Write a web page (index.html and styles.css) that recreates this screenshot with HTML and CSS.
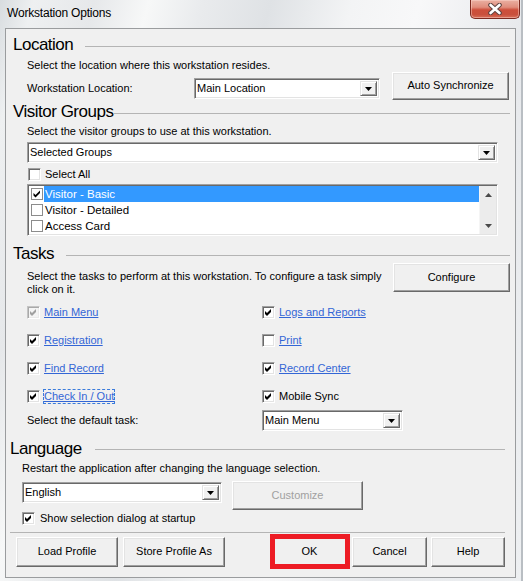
FILE: index.html
```html
<!DOCTYPE html>
<html>
<head>
<meta charset="utf-8">
<title>Workstation Options</title>
<link rel="stylesheet" href="styles.css">
</head>
<body>
<div class="window">
  <div class="titlebar">
    <div class="title">Workstation Options</div>
    <div class="close">
      <svg width="14" height="12" viewBox="0 0 14 12"><path d="M2.5 2 L11.5 10 M11.5 2 L2.5 10" stroke="#5e4340" stroke-width="4.6" stroke-linecap="round" fill="none"/><path d="M2.5 2 L11.5 10 M11.5 2 L2.5 10" stroke="#ffffff" stroke-width="2.6" stroke-linecap="round" fill="none"/></svg>
    </div>
  </div>
  <div class="client">
    <div class="heading h-loc">Location</div>
    <div class="desc">Select the location where this workstation resides.</div>
    <div class="loc-row">
      <div class="loc-label">Workstation Location:</div>
      <div class="combo loc-combo"><span class="val">Main Location</span><span class="drop"><svg width="7" height="4" viewBox="0 0 7 4"><polygon points="0,0 7,0 3.5,4" fill="#000"/></svg></span></div>
      <div class="btn sync">Auto Synchronize</div>
    </div>

    <div class="heading h-vis">Visitor Groups</div>
    <div class="desc">Select the visitor groups to use at this workstation.</div>
    <div class="combo wide"><span class="val">Selected Groups</span><span class="drop"><svg width="7" height="4" viewBox="0 0 7 4"><polygon points="0,0 7,0 3.5,4" fill="#000"/></svg></span></div>
    <div class="check-row selall"><span class="cb"></span><span>Select All</span></div>
    <div class="listbox">
      <div class="items">
        <div class="item"><span class="lcb"><svg width="10" height="10" viewBox="0 0 10 10"><polygon points="1.5,4 3.5,6 8,1.5 8,4 3.5,8.5 1.5,6.5" fill="#000"/></svg></span><span class="itext sel">Visitor - Basic</span></div>
        <div class="item"><span class="lcb"></span><span class="itext">Visitor - Detailed</span></div>
        <div class="item"><span class="lcb"></span><span class="itext">Access Card</span></div>
      </div>
      <div class="sb">
        <svg width="7" height="4" viewBox="0 0 7 4"><polygon points="3.5,0 7,4 0,4" fill="#4a4a4a"/></svg>
        <svg width="7" height="4" viewBox="0 0 7 4"><polygon points="0,0 7,0 3.5,4" fill="#4a4a4a"/></svg>
      </div>
    </div>

    <div class="heading h-tasks">Tasks</div>
    <div class="tasks-row">
      <div class="tasks-desc">Select the tasks to perform at this workstation. To configure a task simply<br>click on it.</div>
      <div class="btn conf">Configure</div>
    </div>
    <div class="task-grid">
      <div class="task"><span class="cb on dis"><svg width="11" height="11" viewBox="0 0 11 11"><polygon points="2,4 4,6 8,2 8,5 4,9 2,7" fill="#a0a0a0"/></svg></span><span class="link">Main Menu</span></div>
      <div class="task"><span class="cb on"><svg width="11" height="11" viewBox="0 0 11 11"><polygon points="2,4 4,6 8,2 8,5 4,9 2,7" fill="#000"/></svg></span><span class="link">Logs and Reports</span></div>
      <div class="task"><span class="cb on"><svg width="11" height="11" viewBox="0 0 11 11"><polygon points="2,4 4,6 8,2 8,5 4,9 2,7" fill="#000"/></svg></span><span class="link">Registration</span></div>
      <div class="task"><span class="cb"></span><span class="link">Print</span></div>
      <div class="task"><span class="cb on"><svg width="11" height="11" viewBox="0 0 11 11"><polygon points="2,4 4,6 8,2 8,5 4,9 2,7" fill="#000"/></svg></span><span class="link">Find Record</span></div>
      <div class="task"><span class="cb on"><svg width="11" height="11" viewBox="0 0 11 11"><polygon points="2,4 4,6 8,2 8,5 4,9 2,7" fill="#000"/></svg></span><span class="link">Record Center</span></div>
      <div class="task"><span class="cb on"><svg width="11" height="11" viewBox="0 0 11 11"><polygon points="2,4 4,6 8,2 8,5 4,9 2,7" fill="#000"/></svg></span><span class="link focus">Check In / Out</span></div>
      <div class="task"><span class="cb on"><svg width="11" height="11" viewBox="0 0 11 11"><polygon points="2,4 4,6 8,2 8,5 4,9 2,7" fill="#000"/></svg></span><span>Mobile Sync</span></div>
    </div>
    <div class="default-row">
      <div class="default-label">Select the default task:</div>
      <div class="combo task-combo"><span class="val">Main Menu</span><span class="drop"><svg width="7" height="4" viewBox="0 0 7 4"><polygon points="0,0 7,0 3.5,4" fill="#000"/></svg></span></div>
    </div>

    <div class="heading h-lang">Language</div>
    <div class="desc lang-desc">Restart the application after changing the language selection.</div>
    <div class="lang-row">
      <div class="combo lang-combo"><span class="val">English</span><span class="drop"><svg width="7" height="4" viewBox="0 0 7 4"><polygon points="0,0 7,0 3.5,4" fill="#000"/></svg></span></div>
      <div class="btn custom disabled">Customize</div>
    </div>
    <div class="check-row showsel"><span class="cb on"><svg width="11" height="11" viewBox="0 0 11 11"><polygon points="2,4 4,6 8,2 8,5 4,9 2,7" fill="#000"/></svg></span><span>Show selection dialog at startup</span></div>

    <div class="separator"></div>
    <div class="footer">
      <div class="btn wbtn">Load Profile</div>
      <div class="btn wbtn">Store Profile As</div>
      <div class="btn nbtn ok">OK</div>
      <div class="btn nbtn cancel">Cancel</div>
      <div class="btn help">Help</div>
    </div>
  </div>
</div>
</body>
</html>
```
FILE: styles.css
```css
* { box-sizing: border-box; }
html, body { margin: 0; padding: 0; }
body {
  width: 523px;
  height: 581px;
  overflow: hidden;
  font-family: "Liberation Sans", Arial, sans-serif;
  font-size: 11px;
  color: #000;
  background: #e6e9ec;
}
.window {
  width: 523px;
  height: 581px;
  display: flex;
  flex-direction: column;
  background: linear-gradient(105deg, #d8dcdf 0%, #eef0f1 5%, #e6e8ea 14%, #f7f8f8 22%, #e9ebed 30%, #dfe2e5 40%, #f3f4f5 52%, #f8f8f9 62%, #e7e9ec 78%, #eef0f2 100%);
  box-shadow: inset -2px 0 0 #b9bec3;
}
.titlebar {
  height: 28px;
  display: flex;
  align-items: flex-start;
  flex: none;
}
.title {
  font-size: 12px;
  letter-spacing: -0.2px;
  line-height: 14px;
  margin: 6px 0 0 7px;
  color: #000;
}
.close {
  margin-left: auto;
  margin-right: 3px;
  width: 50px;
  height: 19px;
  border: 1px solid #7c2a20;
  border-top: none;
  border-radius: 0 0 5px 5px;
  background: linear-gradient(#eab0a2 0%, #e08d7c 40%, #cd4e3a 55%, #c9503c 80%, #d86e58 100%);
  box-shadow: inset 0 0 0 1px rgba(255, 220, 210, 0.45);
  display: flex;
  align-items: center;
  justify-content: center;
  padding-bottom: 1px;
}
.client {
  margin-left: 5px;
  width: 511px;
  height: 550px;
  flex: none;
  border: 1px solid #9a9c9e;
  background: #f0f0f0;
  padding: 7px 5px 0 7px;
  display: flex;
  flex-direction: column;
}
.heading {
  display: flex;
  height: 18px;
  font-size: 17px;
  line-height: 18px;
  letter-spacing: -0.5px;
  white-space: nowrap;
  flex: none;
}
.heading::after {
  content: "";
  flex: 1;
  align-self: flex-start;
  margin-top: 10px;
  margin-left: 12px;
  border-top: 1px solid #b4b4b4;
}
.h-vis { margin-top: 3px; }
.h-vis::after { margin-left: 1px; }
.h-tasks { margin-top: 9px; }
.h-lang { margin: 9px 5px 0 -3px; }
.h-lang::after { margin-top: 9px; margin-left: 13px; }

.desc {
  line-height: 14px;
  margin: 4px 0 0 14px;
  white-space: nowrap;
  flex: none;
}
.h-vis + .desc { margin-top: 3px; }
.lang-desc { margin: 3px 0 0 9px; }

.loc-row {
  display: flex;
  align-items: flex-start;
  height: 28px;
  margin-left: 14px;
  flex: none;
}
.loc-label {
  width: 167px;
  margin-top: 6px;
  line-height: 21px;
}
.combo {
  display: flex;
  height: 21px;
  background: #fff;
  border: 1px solid;
  border-color: #a0a0a0 #ffffff #ffffff #a0a0a0;
  box-shadow: inset 1px 1px 0 #696969, inset -1px -1px 0 #e3e3e3;
  padding: 2px;
  flex: none;
}
.combo .val {
  flex: 1;
  line-height: 15px;
  padding-left: 0;
  white-space: nowrap;
}
.drop {
  width: 17px;
  background: #f0f0f0;
  border: 1px solid;
  border-color: #e3e3e3 #696969 #696969 #e3e3e3;
  box-shadow: inset 1px 1px 0 #ffffff, inset -1px -1px 0 #a0a0a0;
  display: flex;
  align-items: center;
  justify-content: center;
}
.loc-combo { width: 186px; margin-top: 6px; }
.btn {
  display: flex;
  align-items: center;
  justify-content: center;
  background: #f0f0f0;
  border: 1px solid;
  border-color: #ffffff #696969 #696969 #ffffff;
  box-shadow: inset -1px -1px 0 #a0a0a0, inset 1px 1px 0 #e3e3e3;
  padding-bottom: 2px;
  white-space: nowrap;
  flex: none;
}
.sync { width: 117px; height: 28px; margin-left: 12px; }

.wide { width: 471px; margin: 4px 0 0 14px; }
.check-row {
  display: flex;
  align-items: center;
  height: 16px;
  flex: none;
  white-space: nowrap;
}
.selall { margin: 3px 0 0 15px; gap: 4px; }
.cb {
  width: 13px;
  height: 13px;
  flex: none;
  background: #fff;
  border: 1px solid;
  border-color: #a0a0a0 #ffffff #ffffff #a0a0a0;
  box-shadow: inset 1px 1px 0 #696969, inset -1px -1px 0 #e3e3e3;
  display: flex;
}
.cb svg { display: block; }
.cb.dis {
  background: #f4f4f4;
  border-color: #c4c4c4 #ffffff #ffffff #c4c4c4;
  box-shadow: inset 1px 1px 0 #a9a9a9, inset -1px -1px 0 #eaeaea;
}

.listbox {
  display: flex;
  width: 471px;
  height: 52px;
  margin: 2px 0 0 14px;
  background: #fff;
  border: 1px solid;
  border-color: #a0a0a0 #ffffff #ffffff #a0a0a0;
  box-shadow: inset 1px 1px 0 #696969, inset -1px -1px 0 #e3e3e3;
  padding: 1px;
  flex: none;
}
.items { flex: 1; display: flex; flex-direction: column; }
.item {
  height: 16px;
  display: flex;
  align-items: center;
  padding-left: 2px;
}
.lcb {
  width: 12px;
  height: 12px;
  border: 1px solid #8c8c8c;
  background: #fff;
  flex: none;
  display: flex;
  align-items: center;
  justify-content: center;
}
.itext {
  flex: 1;
  height: 16px;
  line-height: 16px;
  margin-left: 1px;
  padding-left: 1px;
  font-size: 11.5px;
  white-space: nowrap;
}
.itext.sel { background: #3399ff; color: #fff; }
.sb {
  width: 17px;
  background: #ececec;
  border-left: 1px solid #f5f5f5;
  display: flex;
  flex-direction: column;
  align-items: center;
  justify-content: space-between;
  padding: 7px 0 6px 0;
}

.tasks-row {
  display: flex;
  align-items: flex-start;
  height: 35px;
  margin-left: 14px;
  flex: none;
}
.tasks-desc {
  margin-top: 7px;
  line-height: 13px;
  white-space: nowrap;
}
.conf { width: 117px; height: 29px; margin-left: auto; }

.task-grid {
  display: grid;
  grid-template-columns: 235px 235px;
  grid-auto-rows: 28px;
  margin-left: 14px;
  flex: none;
}
.task {
  display: flex;
  align-items: center;
  gap: 4px;
  white-space: nowrap;
}
.link {
  color: #3366d6;
  text-decoration: underline;
  line-height: 13px;
}
.focus { outline: 1px dashed #3a7bdc; outline-offset: 0; }

.default-row {
  display: flex;
  height: 21px;
  margin-left: 14px;
  flex: none;
}
.default-label { width: 235px; line-height: 21px; }
.task-combo { width: 141px; }

.lang-row {
  display: flex;
  align-items: flex-start;
  height: 29px;
  margin: 6px 0 0 9px;
  flex: none;
}
.lang-combo { width: 200px; margin-top: 1px; }
.custom { width: 131px; height: 29px; margin-left: 10px; }
.disabled { color: #a0a0a0; }
.showsel { margin-left: 9px; gap: 5px; }

.separator {
  height: 1px;
  background: #b4b4b4;
  margin: 6px 5px 0 -3px;
  flex: none;
}
.footer {
  display: flex;
  height: 30px;
  margin: 4px 0 0 3px;
  flex: none;
}
.footer .btn { height: 30px; }
.wbtn { width: 102px; margin-right: 5px; }
.nbtn { width: 75px; }
.ok { margin-left: 42px; margin-right: 5px; position: relative; }
.ok::after {
  content: "";
  position: absolute;
  left: -3px;
  top: -4px;
  right: -4px;
  bottom: -3px;
  border: 5px solid #ed1c24;
}
.help { width: 74px; margin-left: 4px; }
```
